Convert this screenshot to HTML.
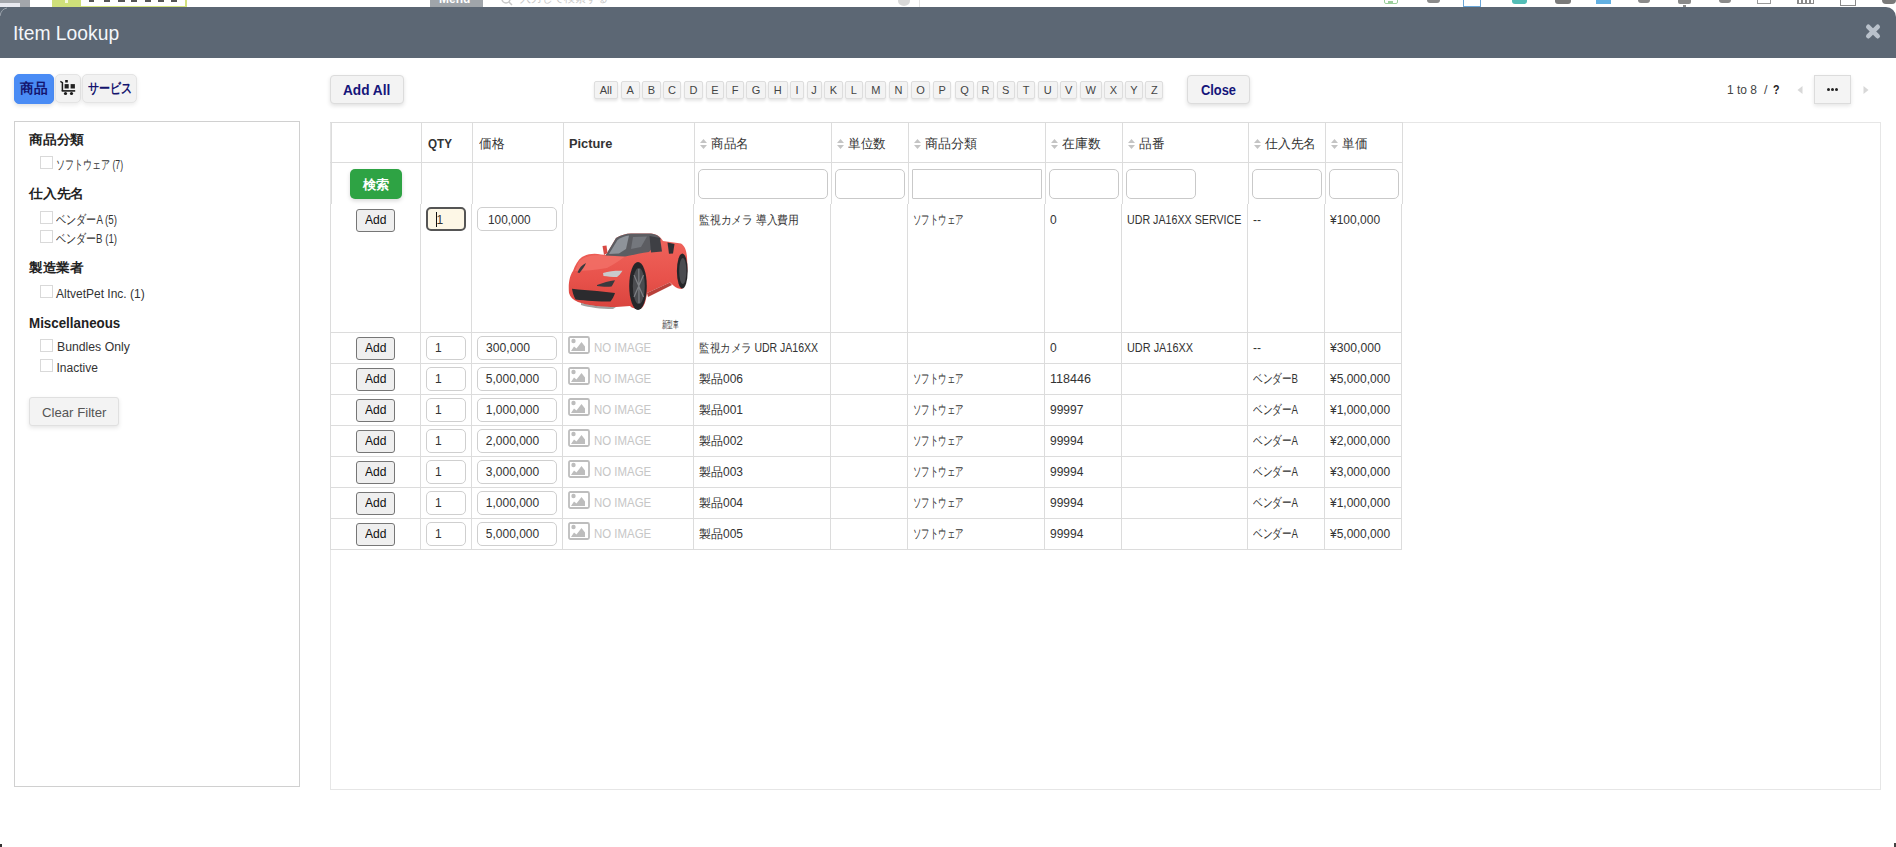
<!DOCTYPE html>
<html><head><meta charset="utf-8"><title>Item Lookup</title>
<style>
*{box-sizing:border-box;margin:0;padding:0}
html,body{width:1896px;height:847px;overflow:hidden;background:#fff;font-family:"Liberation Sans",sans-serif;color:#333}
.abs{position:absolute}
.t{position:absolute;white-space:nowrap;line-height:1}
.btn{position:absolute;box-sizing:border-box;text-align:center;white-space:nowrap}
.lt{background:#f3f3f3;border:1px solid #dedede;border-radius:2px;box-shadow:0 2px 3px rgba(0,0,0,.10);color:#444;font-size:11px;line-height:17px}
.inp{position:absolute;border:1px solid #c9c9c9;border-radius:5px;background:#fff}
.cb{position:absolute;width:13px;height:13px;border:1px solid #d6d6d6;background:#fff}
.addb{position:absolute;width:39px;height:22px;border:1px solid #767676;border-radius:3px;background:#efefef;font-size:13px;line-height:20px;text-align:center;color:#111}
.qty{position:absolute;width:40px;height:24px;border:1px solid #cfcfcf;border-radius:5px;background:#fff;font-size:12px;line-height:22px;padding-left:11px;color:#333}
.prc{position:absolute;width:80px;height:24px;border:1px solid #cfcfcf;border-radius:5px;background:#fff;font-size:12px;line-height:22px;padding-left:10px;color:#333}
.sa{position:absolute;width:7px;height:10px}
</style></head><body>

<div class="abs" style="left:0px;top:0px;width:1896px;height:8px;background:#fff"></div>
<div class="abs" style="left:0px;top:0px;width:30px;height:8px;background:#a3a6ab"></div>
<div class="abs" style="left:0px;top:3px;width:20px;height:4px;background:#e8e9ef"></div>
<div class="abs" style="left:52px;top:0px;width:29px;height:8px;background:#cfe07a"></div>
<div class="abs" style="left:81px;top:-2px;width:106px;height:10px;border:2px solid #d3e27e;border-left:0;background:#fff"></div>
<div class="abs" style="left:89px;top:0px;width:5px;height:2px;background:#555"></div>
<div class="abs" style="left:104px;top:0px;width:6px;height:2px;background:#555"></div>
<div class="abs" style="left:118px;top:0px;width:7px;height:2px;background:#555"></div>
<div class="abs" style="left:131px;top:0px;width:6px;height:2px;background:#555"></div>
<div class="abs" style="left:145px;top:0px;width:6px;height:2px;background:#555"></div>
<div class="abs" style="left:158px;top:0px;width:6px;height:2px;background:#555"></div>
<div class="abs" style="left:171px;top:0px;width:6px;height:2px;background:#555"></div>
<div class="abs" style="left:65px;top:0px;width:3px;height:3px;background:#f4f8dc"></div>
<div class="abs" style="left:430px;top:0px;width:53px;height:8px;background:#a0a5aa"></div>
<div class="t" style="left:439px;top:-7px;font-size:12px;color:#fff;font-weight:bold;">Menu</div>
<div class="abs" style="left:487px;top:0px;width:433px;height:8px;border-right:1px solid #e4e4e4;background:#fff"></div>
<div class="t" style="left:520px;top:-7px;font-size:11px;color:#c8c8c8;font-weight:normal;">入力して検索する</div>
<svg class="abs" style="left:500px;top:-4px" width="14" height="10" viewBox="0 0 14 10"><circle cx="6" cy="3" r="4" fill="none" stroke="#c8c8c8" stroke-width="1.5"/><path d="M9 6 L12 9" stroke="#c8c8c8" stroke-width="1.5"/></svg>
<div class="abs" style="left:898px;top:-4px;width:12px;height:10px;background:#d8d8d8;border-radius:50%"></div>
<div class="abs" style="left:1384px;top:-4px;width:14px;height:8px;border:1.5px solid #9ccf9c;border-radius:2px"></div>
<div class="abs" style="left:1388px;top:1px;width:5px;height:2px;background:#9ccf9c"></div>
<div class="abs" style="left:1427px;top:0px;width:13px;height:3px;background:#8a8a8a;border-radius:0 0 4px 4px"></div>
<div class="abs" style="left:1463px;top:-4px;width:18px;height:11px;border-left:1.5px solid #6aa6d8;border-right:1.5px solid #6aa6d8;border-bottom:1.5px solid #6aa6d8"></div>
<div class="abs" style="left:1512px;top:0px;width:15px;height:4px;background:#52bdb6;border-radius:0 0 3px 3px"></div>
<div class="abs" style="left:1555px;top:0px;width:16px;height:4px;background:#7a7a7a;border-radius:0 0 3px 3px"></div>
<div class="abs" style="left:1596px;top:0px;width:15px;height:4px;background:#62b0e2"></div>
<div class="abs" style="left:1638px;top:0px;width:12px;height:3px;background:#8a8a8a;border-radius:0 0 6px 6px"></div>
<div class="abs" style="left:1678px;top:0px;width:13px;height:4px;background:#8a8a8a;border-radius:0 0 2px 2px"></div>
<div class="abs" style="left:1683px;top:5px;width:3px;height:2px;background:#8a8a8a"></div>
<div class="abs" style="left:1719px;top:0px;width:12px;height:3px;background:#8a8a8a;border-radius:0 0 6px 6px"></div>
<div class="abs" style="left:1757px;top:-3px;width:14px;height:7px;border:1.2px solid #9a9a9a"></div>
<div class="abs" style="left:1797px;top:0px;width:17px;height:4px;border-bottom:1.5px solid #8a8a8a;background:repeating-linear-gradient(90deg,#8a8a8a 0 2px,transparent 2px 4px)"></div>
<div class="abs" style="left:1840px;top:-4px;width:16px;height:10px;border:1.5px solid #8a8a8a"></div>
<div class="abs" style="left:1882px;top:0px;width:14px;height:4px;background:#7a7a7a;border-radius:0 0 4px 4px"></div>
<div class="abs" style="left:0;top:7px;width:1896px;height:51px;background:#5c6774;border-radius:0 10px 0 0"></div>
<div class="t" style="left:13px;top:24px;font-size:19.3px;color:#f4f6fa;font-weight:normal;">Item Lookup</div>
<svg class="abs" style="left:0;top:7px" width="10" height="10" viewBox="0 0 10 10"><path d="M0 9 Q1 2 7 1" fill="none" stroke="#9aa2ab" stroke-width="1"/></svg>
<svg class="abs" style="left:1865px;top:23px" width="16" height="17" viewBox="0 0 16 17"><path d="M3.3 3.8 L12.7 13.2 M12.7 3.8 L3.3 13.2" stroke="#b9c1cb" stroke-width="4.6" stroke-linecap="round"/></svg>
<div class="abs" style="left:14px;top:74px;width:40px;height:30px;background:#4a8cf5;border:1px solid #4a8cf5;border-radius:5px;box-shadow:0 2px 4px rgba(0,0,0,.12)"></div>
<div class="t" style="left:20px;top:82.17px;font-size:13.5px;color:#14146e;font-weight:bold;transform:scaleX(0.979);transform-origin:0 0;">商品</div>
<div class="abs" style="left:55px;top:74px;width:26px;height:29px;background:#f2f2f2;border:1px solid #e4e4e4;border-radius:5px;box-shadow:0 2px 4px rgba(0,0,0,.08)"></div>
<svg class="abs" style="left:60px;top:79px" width="17" height="17" viewBox="0 0 17 17"><path d="M0.3 2.4 L2.4 3.6 L2.4 12" fill="none" stroke="#1a1a1a" stroke-width="1.5" stroke-linejoin="round"/><rect x="1.7" y="11.1" width="13.5" height="1.6" fill="#1a1a1a"/><rect x="5.2" y="1" width="2.6" height="2.5" fill="#1a1a1a"/><rect x="4.6" y="5.1" width="4.1" height="4.4" fill="#222"/><rect x="10.6" y="5.1" width="4.3" height="4.4" fill="#222"/><circle cx="5.5" cy="14.5" r="1.6" fill="#1a1a1a"/><circle cx="11.5" cy="14.5" r="1.6" fill="#1a1a1a"/></svg>
<div class="abs" style="left:82px;top:74px;width:55px;height:29px;background:#f2f2f2;border:1px solid #e4e4e4;border-radius:5px;box-shadow:0 2px 4px rgba(0,0,0,.08)"></div>
<div class="t" style="left:87.5px;top:82.07px;font-size:13.5px;color:#14146e;font-weight:600;transform:scaleX(0.786);transform-origin:0 0;">サービス</div>
<div class="abs" style="left:14px;top:121px;width:286px;height:666px;border:1px solid #d0d0d0;background:#fff"></div>
<div class="t" style="left:29px;top:134.12px;font-size:12.5px;color:#222;font-weight:bold;transform:scaleX(1.058);transform-origin:0 0;">商品分類</div>
<div class="abs" style="left:40px;top:156px;width:13px;height:13px;border:1px solid #d9d9d9;background:#fff"></div>
<div class="t" style="left:56px;top:159.22px;font-size:12.5px;color:#333;font-weight:normal;transform:scaleX(0.693);transform-origin:0 0;">ソフトウェア (7)</div>
<div class="t" style="left:29px;top:188.42px;font-size:12.5px;color:#222;font-weight:bold;transform:scaleX(1.058);transform-origin:0 0;">仕入先名</div>
<div class="abs" style="left:40px;top:211px;width:13px;height:13px;border:1px solid #d9d9d9;background:#fff"></div>
<div class="t" style="left:56px;top:213.72px;font-size:12.5px;color:#333;font-weight:normal;transform:scaleX(0.778);transform-origin:0 0;">ベンダーA (5)</div>
<div class="abs" style="left:40px;top:230px;width:13px;height:13px;border:1px solid #d9d9d9;background:#fff"></div>
<div class="t" style="left:56px;top:232.72px;font-size:12.5px;color:#333;font-weight:normal;transform:scaleX(0.771);transform-origin:0 0;">ベンダーB (1)</div>
<div class="t" style="left:29px;top:261.52px;font-size:12.5px;color:#222;font-weight:bold;transform:scaleX(1.048);transform-origin:0 0;">製造業者</div>
<div class="abs" style="left:40px;top:285px;width:13px;height:13px;border:1px solid #d9d9d9;background:#fff"></div>
<div class="t" style="left:56px;top:287.84px;font-size:12px;color:#333;font-weight:normal;">AltvetPet Inc. (1)</div>
<div class="t" style="left:29px;top:316.35px;font-size:14px;color:#222;font-weight:bold;transform:scaleX(0.954);transform-origin:0 0;">Miscellaneous</div>
<div class="abs" style="left:40px;top:339px;width:13px;height:13px;border:1px solid #d9d9d9;background:#fff"></div>
<div class="t" style="left:56.5px;top:341.44px;font-size:12px;color:#333;font-weight:normal;transform:scaleX(1.020);transform-origin:0 0;">Bundles Only</div>
<div class="abs" style="left:40px;top:359px;width:13px;height:13px;border:1px solid #d9d9d9;background:#fff"></div>
<div class="t" style="left:56.5px;top:361.74px;font-size:12px;color:#333;font-weight:normal;">Inactive</div>
<div class="abs" style="left:29px;top:397px;width:90px;height:29px;background:#f3f3f3;border:1px solid #e0e0e0;border-radius:3px;box-shadow:0 2px 4px rgba(0,0,0,.10)"></div>
<div class="t" style="left:42px;top:406.0px;font-size:13px;color:#555;font-weight:normal;transform:scaleX(1.014);transform-origin:0 0;">Clear Filter</div>
<div class="abs" style="left:330px;top:75px;width:74px;height:29px;background:#f3f3f3;border:1px solid #dcdcdc;border-radius:4px;box-shadow:0 2px 4px rgba(0,0,0,.12)"></div>
<div class="t" style="left:343px;top:83.15px;font-size:14px;color:#15157a;font-weight:bold;transform:scaleX(0.976);transform-origin:0 0;">Add All</div>
<div class="btn lt" style="left:593.5px;top:80.5px;width:24.7px;height:18.5px">All</div>
<div class="btn lt" style="left:620.8px;top:80.5px;width:18.9px;height:18.5px">A</div>
<div class="btn lt" style="left:642.3px;top:80.5px;width:18.3px;height:18.5px">B</div>
<div class="btn lt" style="left:662.8px;top:80.5px;width:18.4px;height:18.5px">C</div>
<div class="btn lt" style="left:683.7px;top:80.5px;width:19.8px;height:18.5px">D</div>
<div class="btn lt" style="left:706.3px;top:80.5px;width:17.4px;height:18.5px">E</div>
<div class="btn lt" style="left:726.3px;top:80.5px;width:17.4px;height:18.5px">F</div>
<div class="btn lt" style="left:746.2px;top:80.5px;width:19.6px;height:18.5px">G</div>
<div class="btn lt" style="left:768.0px;top:80.5px;width:19.7px;height:18.5px">H</div>
<div class="btn lt" style="left:789.9px;top:80.5px;width:14.5px;height:18.5px">I</div>
<div class="btn lt" style="left:806.6px;top:80.5px;width:15.0px;height:18.5px">J</div>
<div class="btn lt" style="left:823.8px;top:80.5px;width:19.0px;height:18.5px">K</div>
<div class="btn lt" style="left:845.0px;top:80.5px;width:17.7px;height:18.5px">L</div>
<div class="btn lt" style="left:865.3px;top:80.5px;width:21.2px;height:18.5px">M</div>
<div class="btn lt" style="left:888.7px;top:80.5px;width:19.6px;height:18.5px">N</div>
<div class="btn lt" style="left:910.8px;top:80.5px;width:19.6px;height:18.5px">O</div>
<div class="btn lt" style="left:933.0px;top:80.5px;width:18.4px;height:18.5px">P</div>
<div class="btn lt" style="left:954.6px;top:80.5px;width:19.9px;height:18.5px">Q</div>
<div class="btn lt" style="left:976.7px;top:80.5px;width:17.7px;height:18.5px">R</div>
<div class="btn lt" style="left:996.6px;top:80.5px;width:18.1px;height:18.5px">S</div>
<div class="btn lt" style="left:1016.9px;top:80.5px;width:18.4px;height:18.5px">T</div>
<div class="btn lt" style="left:1037.8px;top:80.5px;width:19.9px;height:18.5px">U</div>
<div class="btn lt" style="left:1059.9px;top:80.5px;width:17.5px;height:18.5px">V</div>
<div class="btn lt" style="left:1080.0px;top:80.5px;width:21.5px;height:18.5px">W</div>
<div class="btn lt" style="left:1104.3px;top:80.5px;width:18.4px;height:18.5px">X</div>
<div class="btn lt" style="left:1125.2px;top:80.5px;width:17.4px;height:18.5px">Y</div>
<div class="btn lt" style="left:1145.1px;top:80.5px;width:18.4px;height:18.5px">Z</div>
<div class="abs" style="left:1187px;top:75px;width:63px;height:29px;background:#f3f3f3;border:1px solid #dcdcdc;border-radius:4px;box-shadow:0 2px 4px rgba(0,0,0,.12)"></div>
<div class="t" style="left:1201px;top:83.15px;font-size:14px;color:#15157a;font-weight:bold;transform:scaleX(0.918);transform-origin:0 0;">Close</div>
<div class="t" style="left:1727px;top:84.42px;font-size:12.5px;color:#444;font-weight:normal;transform:scaleX(0.959);transform-origin:0 0;">1 to 8</div>
<div class="t" style="left:1764px;top:84.42px;font-size:12.5px;color:#444;font-weight:normal;">/</div>
<div class="t" style="left:1772.5px;top:84.42px;font-size:12.5px;color:#222;font-weight:bold;transform:scaleX(0.851);transform-origin:0 0;">?</div>
<svg class="abs" style="left:1797px;top:86px" width="6" height="8" viewBox="0 0 6 8"><path d="M5.5 0 L0.5 4 L5.5 8 Z" fill="#d8d8d8"/></svg>
<div class="abs" style="left:1814px;top:75px;width:37px;height:29px;background:#f4f4f4;border:1px solid #dcdcdc;box-shadow:0 2px 4px rgba(0,0,0,.10)"></div>
<div class="abs" style="left:1827px;top:88.3px;width:3px;height:3px;background:#222;border-radius:50%"></div>
<div class="abs" style="left:1831px;top:88.3px;width:3px;height:3px;background:#222;border-radius:50%"></div>
<div class="abs" style="left:1835px;top:88.3px;width:3px;height:3px;background:#222;border-radius:50%"></div>
<svg class="abs" style="left:1863px;top:86px" width="6" height="8" viewBox="0 0 6 8"><path d="M0.5 0 L5.5 4 L0.5 8 Z" fill="#d8d8d8"/></svg>
<div class="abs" style="left:330px;top:122px;width:1551px;height:668px;border:1px solid #e6e6e6;background:#fff"></div>
<div class="abs" style="left:330px;top:122px;width:1073px;height:1px;background:#dcdcdc"></div>
<div class="abs" style="left:330px;top:162px;width:1073px;height:1px;background:#dcdcdc"></div>
<div class="abs" style="left:330px;top:332px;width:1072px;height:1px;background:#dcdcdc"></div>
<div class="abs" style="left:330px;top:363px;width:1072px;height:1px;background:#dcdcdc"></div>
<div class="abs" style="left:330px;top:394px;width:1072px;height:1px;background:#dcdcdc"></div>
<div class="abs" style="left:330px;top:425px;width:1072px;height:1px;background:#dcdcdc"></div>
<div class="abs" style="left:330px;top:456px;width:1072px;height:1px;background:#dcdcdc"></div>
<div class="abs" style="left:330px;top:487px;width:1072px;height:1px;background:#dcdcdc"></div>
<div class="abs" style="left:330px;top:518px;width:1072px;height:1px;background:#dcdcdc"></div>
<div class="abs" style="left:330px;top:549px;width:1072px;height:1px;background:#dcdcdc"></div>
<div class="abs" style="left:331px;top:123px;width:1px;height:81px;background:#dcdcdc"></div>
<div class="abs" style="left:330px;top:204px;width:1px;height:346px;background:#dcdcdc"></div>
<div class="abs" style="left:421px;top:123px;width:1px;height:81px;background:#dcdcdc"></div>
<div class="abs" style="left:420px;top:204px;width:1px;height:346px;background:#dcdcdc"></div>
<div class="abs" style="left:472px;top:123px;width:1px;height:81px;background:#dcdcdc"></div>
<div class="abs" style="left:471px;top:204px;width:1px;height:346px;background:#dcdcdc"></div>
<div class="abs" style="left:563px;top:123px;width:1px;height:81px;background:#dcdcdc"></div>
<div class="abs" style="left:562px;top:204px;width:1px;height:346px;background:#dcdcdc"></div>
<div class="abs" style="left:694px;top:123px;width:1px;height:81px;background:#dcdcdc"></div>
<div class="abs" style="left:693px;top:204px;width:1px;height:346px;background:#dcdcdc"></div>
<div class="abs" style="left:831px;top:123px;width:1px;height:81px;background:#dcdcdc"></div>
<div class="abs" style="left:830px;top:204px;width:1px;height:346px;background:#dcdcdc"></div>
<div class="abs" style="left:908px;top:123px;width:1px;height:81px;background:#dcdcdc"></div>
<div class="abs" style="left:907px;top:204px;width:1px;height:346px;background:#dcdcdc"></div>
<div class="abs" style="left:1045px;top:123px;width:1px;height:81px;background:#dcdcdc"></div>
<div class="abs" style="left:1044px;top:204px;width:1px;height:346px;background:#dcdcdc"></div>
<div class="abs" style="left:1122px;top:123px;width:1px;height:81px;background:#dcdcdc"></div>
<div class="abs" style="left:1121px;top:204px;width:1px;height:346px;background:#dcdcdc"></div>
<div class="abs" style="left:1248px;top:123px;width:1px;height:81px;background:#dcdcdc"></div>
<div class="abs" style="left:1247px;top:204px;width:1px;height:346px;background:#dcdcdc"></div>
<div class="abs" style="left:1325px;top:123px;width:1px;height:81px;background:#dcdcdc"></div>
<div class="abs" style="left:1324px;top:204px;width:1px;height:346px;background:#dcdcdc"></div>
<div class="abs" style="left:1402px;top:123px;width:1px;height:81px;background:#dcdcdc"></div>
<div class="abs" style="left:1401px;top:204px;width:1px;height:346px;background:#dcdcdc"></div>
<div class="t" style="left:427.6px;top:138.14px;font-size:12px;color:#333;font-weight:bold;transform:scaleX(0.973);transform-origin:0 0;">QTY</div>
<div class="t" style="left:478.5px;top:137.0px;font-size:13px;color:#333;font-weight:normal;transform:scaleX(0.977);transform-origin:0 0;">価格</div>
<div class="t" style="left:568.6px;top:138.14px;font-size:12px;color:#333;font-weight:bold;transform:scaleX(1.067);transform-origin:0 0;">Picture</div>
<svg class="sa" style="left:700px;top:138.5px" viewBox="0 0 7 10"><path d="M3.5 0 L7 4 L0 4 Z M0 6 L7 6 L3.5 10 Z" fill="#c4c4c4"/></svg>
<div class="t" style="left:710.5px;top:137.0px;font-size:13px;color:#333;font-weight:normal;transform:scaleX(0.962);transform-origin:0 0;">商品名</div>
<svg class="sa" style="left:837px;top:138.5px" viewBox="0 0 7 10"><path d="M3.5 0 L7 4 L0 4 Z M0 6 L7 6 L3.5 10 Z" fill="#c4c4c4"/></svg>
<div class="t" style="left:847.5px;top:137.0px;font-size:13px;color:#333;font-weight:normal;transform:scaleX(0.969);transform-origin:0 0;">単位数</div>
<svg class="sa" style="left:914px;top:138.5px" viewBox="0 0 7 10"><path d="M3.5 0 L7 4 L0 4 Z M0 6 L7 6 L3.5 10 Z" fill="#c4c4c4"/></svg>
<div class="t" style="left:924.5px;top:137.0px;font-size:13px;color:#333;font-weight:normal;">商品分類</div>
<svg class="sa" style="left:1051px;top:138.5px" viewBox="0 0 7 10"><path d="M3.5 0 L7 4 L0 4 Z M0 6 L7 6 L3.5 10 Z" fill="#c4c4c4"/></svg>
<div class="t" style="left:1061.5px;top:137.0px;font-size:13px;color:#333;font-weight:normal;transform:scaleX(0.985);transform-origin:0 0;">在庫数</div>
<svg class="sa" style="left:1128px;top:138.5px" viewBox="0 0 7 10"><path d="M3.5 0 L7 4 L0 4 Z M0 6 L7 6 L3.5 10 Z" fill="#c4c4c4"/></svg>
<div class="t" style="left:1138.5px;top:137.0px;font-size:13px;color:#333;font-weight:normal;transform:scaleX(0.973);transform-origin:0 0;">品番</div>
<svg class="sa" style="left:1254px;top:138.5px" viewBox="0 0 7 10"><path d="M3.5 0 L7 4 L0 4 Z M0 6 L7 6 L3.5 10 Z" fill="#c4c4c4"/></svg>
<div class="t" style="left:1264.5px;top:137.0px;font-size:13px;color:#333;font-weight:normal;transform:scaleX(0.981);transform-origin:0 0;">仕入先名</div>
<svg class="sa" style="left:1331px;top:138.5px" viewBox="0 0 7 10"><path d="M3.5 0 L7 4 L0 4 Z M0 6 L7 6 L3.5 10 Z" fill="#c4c4c4"/></svg>
<div class="t" style="left:1341.5px;top:137.0px;font-size:13px;color:#333;font-weight:normal;transform:scaleX(0.973);transform-origin:0 0;">単価</div>
<div class="abs" style="left:350px;top:169px;width:52px;height:30px;background:#2ea344;border-radius:5px;box-shadow:0 2px 4px rgba(0,0,0,.15)"></div>
<div class="t" style="left:363px;top:178.0px;font-size:13px;color:#fff;font-weight:bold;transform:scaleX(1.019);transform-origin:0 0;">検索</div>
<div class="inp" style="left:698px;top:169px;width:130px;height:30px;border-radius:5px"></div>
<div class="inp" style="left:835px;top:169px;width:70px;height:30px;border-radius:5px"></div>
<div class="inp" style="left:912px;top:169px;width:130px;height:30px;border-radius:1px"></div>
<div class="inp" style="left:1049px;top:169px;width:70px;height:30px;border-radius:5px"></div>
<div class="inp" style="left:1126px;top:169px;width:70px;height:30px;border-radius:5px"></div>
<div class="inp" style="left:1252px;top:169px;width:70px;height:30px;border-radius:5px"></div>
<div class="inp" style="left:1329px;top:169px;width:70px;height:30px;border-radius:5px"></div>
<div class="abs" style="left:356px;top:209px;width:39px;height:23px;border:1px solid #767676;border-radius:3px;background:#efefef"></div>
<div class="t" style="left:364.5px;top:212.6px;font-size:13px;color:#111;font-weight:normal;transform:scaleX(0.929);transform-origin:0 0;">Add</div>
<div class="abs" style="left:426px;top:207px;width:40px;height:24px;border:2px solid #555;border-radius:5px;background:#fdf7e6"></div>
<div class="abs" style="left:435.5px;top:212px;width:1px;height:15px;background:#111"></div>
<div class="t" style="left:436.5px;top:214.34px;font-size:12px;color:#333;font-weight:normal;">1</div>
<div class="abs" style="left:477px;top:207px;width:80px;height:24px;border:1px solid #cfcfcf;border-radius:5px;background:#fff"></div>
<div class="t" style="left:487.7px;top:214.34px;font-size:12px;color:#333;font-weight:normal;transform:scaleX(0.984);transform-origin:0 0;">100,000</div>
<div class="t" style="left:699px;top:213.84px;font-size:12px;color:#333;font-weight:normal;transform:scaleX(0.898);transform-origin:0 0;">監視カメラ 導入費用</div>
<div class="t" style="left:913px;top:212.5px;font-size:13px;color:#333;font-weight:normal;transform:scaleX(0.647);transform-origin:0 0;">ソフトウェア</div>
<div class="t" style="left:1050px;top:213.84px;font-size:12px;color:#333;font-weight:normal;">0</div>
<div class="t" style="left:1127px;top:213.84px;font-size:12px;color:#333;font-weight:normal;transform:scaleX(0.890);transform-origin:0 0;">UDR JA16XX SERVICE</div>
<div class="t" style="left:1253px;top:213.84px;font-size:12px;color:#333;font-weight:normal;">--</div>
<div class="t" style="left:1330px;top:213.84px;font-size:12px;color:#333;font-weight:normal;">¥100,000</div>
<div class="abs" style="left:356px;top:337px;width:39px;height:23px;border:1px solid #767676;border-radius:3px;background:#efefef"></div>
<div class="t" style="left:364.5px;top:340.6px;font-size:13px;color:#111;font-weight:normal;transform:scaleX(0.929);transform-origin:0 0;">Add</div>
<div class="abs" style="left:426px;top:336px;width:40px;height:24px;border:1px solid #cfcfcf;border-radius:5px;background:#fff"></div>
<div class="t" style="left:435px;top:342.34px;font-size:12px;color:#333;font-weight:normal;">1</div>
<div class="abs" style="left:477px;top:336px;width:80px;height:24px;border:1px solid #cfcfcf;border-radius:5px;background:#fff"></div>
<div class="t" style="left:485.8px;top:342.34px;font-size:12px;color:#333;font-weight:normal;transform:scaleX(1.014);transform-origin:0 0;">300,000</div>
<svg class="abs" style="left:568px;top:336px" width="22" height="18" viewBox="0 0 22 18"><rect x="1" y="1" width="20" height="16" rx="1.5" fill="none" stroke="#bdbdbd" stroke-width="1.8"/><circle cx="5.5" cy="5" r="2.2" fill="#bdbdbd"/><path d="M3 15 L6 10.5 L8.5 12.5 L13.5 6 L17 10.5 L17 15 Z" fill="#bdbdbd"/></svg>
<div class="t" style="left:594px;top:341.84px;font-size:12px;color:#c6c6c6;font-weight:normal;transform:scaleX(0.953);transform-origin:0 0;">NO IMAGE</div>
<div class="t" style="left:699px;top:342.34px;font-size:12px;color:#333;font-weight:normal;transform:scaleX(0.875);transform-origin:0 0;">監視カメラ UDR JA16XX</div>
<div class="t" style="left:1050px;top:342.34px;font-size:12px;color:#333;font-weight:normal;">0</div>
<div class="t" style="left:1127px;top:342.34px;font-size:12px;color:#333;font-weight:normal;transform:scaleX(0.908);transform-origin:0 0;">UDR JA16XX</div>
<div class="t" style="left:1253px;top:342.34px;font-size:12px;color:#333;font-weight:normal;">--</div>
<div class="t" style="left:1330px;top:342.34px;font-size:12px;color:#333;font-weight:normal;transform:scaleX(1.013);transform-origin:0 0;">¥300,000</div>
<div class="abs" style="left:356px;top:368px;width:39px;height:23px;border:1px solid #767676;border-radius:3px;background:#efefef"></div>
<div class="t" style="left:364.5px;top:371.6px;font-size:13px;color:#111;font-weight:normal;transform:scaleX(0.929);transform-origin:0 0;">Add</div>
<div class="abs" style="left:426px;top:367px;width:40px;height:24px;border:1px solid #cfcfcf;border-radius:5px;background:#fff"></div>
<div class="t" style="left:435px;top:373.34px;font-size:12px;color:#333;font-weight:normal;">1</div>
<div class="abs" style="left:477px;top:367px;width:80px;height:24px;border:1px solid #cfcfcf;border-radius:5px;background:#fff"></div>
<div class="t" style="left:485.8px;top:373.34px;font-size:12px;color:#333;font-weight:normal;">5,000,000</div>
<svg class="abs" style="left:568px;top:367px" width="22" height="18" viewBox="0 0 22 18"><rect x="1" y="1" width="20" height="16" rx="1.5" fill="none" stroke="#bdbdbd" stroke-width="1.8"/><circle cx="5.5" cy="5" r="2.2" fill="#bdbdbd"/><path d="M3 15 L6 10.5 L8.5 12.5 L13.5 6 L17 10.5 L17 15 Z" fill="#bdbdbd"/></svg>
<div class="t" style="left:594px;top:372.84px;font-size:12px;color:#c6c6c6;font-weight:normal;transform:scaleX(0.953);transform-origin:0 0;">NO IMAGE</div>
<div class="t" style="left:699px;top:373.34px;font-size:12px;color:#333;font-weight:normal;">製品006</div>
<div class="t" style="left:913px;top:372.0px;font-size:13px;color:#333;font-weight:normal;transform:scaleX(0.647);transform-origin:0 0;">ソフトウェア</div>
<div class="t" style="left:1050px;top:373.34px;font-size:12px;color:#333;font-weight:normal;transform:scaleX(1.047);transform-origin:0 0;">118446</div>
<div class="t" style="left:1253px;top:372.0px;font-size:13px;color:#333;font-weight:normal;transform:scaleX(0.742);transform-origin:0 0;">ベンダーB</div>
<div class="t" style="left:1330px;top:373.34px;font-size:12px;color:#333;font-weight:normal;">¥5,000,000</div>
<div class="abs" style="left:356px;top:399px;width:39px;height:23px;border:1px solid #767676;border-radius:3px;background:#efefef"></div>
<div class="t" style="left:364.5px;top:402.6px;font-size:13px;color:#111;font-weight:normal;transform:scaleX(0.929);transform-origin:0 0;">Add</div>
<div class="abs" style="left:426px;top:398px;width:40px;height:24px;border:1px solid #cfcfcf;border-radius:5px;background:#fff"></div>
<div class="t" style="left:435px;top:404.34px;font-size:12px;color:#333;font-weight:normal;">1</div>
<div class="abs" style="left:477px;top:398px;width:80px;height:24px;border:1px solid #cfcfcf;border-radius:5px;background:#fff"></div>
<div class="t" style="left:485.8px;top:404.34px;font-size:12px;color:#333;font-weight:normal;">1,000,000</div>
<svg class="abs" style="left:568px;top:398px" width="22" height="18" viewBox="0 0 22 18"><rect x="1" y="1" width="20" height="16" rx="1.5" fill="none" stroke="#bdbdbd" stroke-width="1.8"/><circle cx="5.5" cy="5" r="2.2" fill="#bdbdbd"/><path d="M3 15 L6 10.5 L8.5 12.5 L13.5 6 L17 10.5 L17 15 Z" fill="#bdbdbd"/></svg>
<div class="t" style="left:594px;top:403.84px;font-size:12px;color:#c6c6c6;font-weight:normal;transform:scaleX(0.953);transform-origin:0 0;">NO IMAGE</div>
<div class="t" style="left:699px;top:404.34px;font-size:12px;color:#333;font-weight:normal;">製品001</div>
<div class="t" style="left:913px;top:403.0px;font-size:13px;color:#333;font-weight:normal;transform:scaleX(0.647);transform-origin:0 0;">ソフトウェア</div>
<div class="t" style="left:1050px;top:404.34px;font-size:12px;color:#333;font-weight:normal;">99997</div>
<div class="t" style="left:1253px;top:403.0px;font-size:13px;color:#333;font-weight:normal;transform:scaleX(0.742);transform-origin:0 0;">ベンダーA</div>
<div class="t" style="left:1330px;top:404.34px;font-size:12px;color:#333;font-weight:normal;">¥1,000,000</div>
<div class="abs" style="left:356px;top:430px;width:39px;height:23px;border:1px solid #767676;border-radius:3px;background:#efefef"></div>
<div class="t" style="left:364.5px;top:433.6px;font-size:13px;color:#111;font-weight:normal;transform:scaleX(0.929);transform-origin:0 0;">Add</div>
<div class="abs" style="left:426px;top:429px;width:40px;height:24px;border:1px solid #cfcfcf;border-radius:5px;background:#fff"></div>
<div class="t" style="left:435px;top:435.34px;font-size:12px;color:#333;font-weight:normal;">1</div>
<div class="abs" style="left:477px;top:429px;width:80px;height:24px;border:1px solid #cfcfcf;border-radius:5px;background:#fff"></div>
<div class="t" style="left:485.8px;top:435.34px;font-size:12px;color:#333;font-weight:normal;">2,000,000</div>
<svg class="abs" style="left:568px;top:429px" width="22" height="18" viewBox="0 0 22 18"><rect x="1" y="1" width="20" height="16" rx="1.5" fill="none" stroke="#bdbdbd" stroke-width="1.8"/><circle cx="5.5" cy="5" r="2.2" fill="#bdbdbd"/><path d="M3 15 L6 10.5 L8.5 12.5 L13.5 6 L17 10.5 L17 15 Z" fill="#bdbdbd"/></svg>
<div class="t" style="left:594px;top:434.84px;font-size:12px;color:#c6c6c6;font-weight:normal;transform:scaleX(0.953);transform-origin:0 0;">NO IMAGE</div>
<div class="t" style="left:699px;top:435.34px;font-size:12px;color:#333;font-weight:normal;">製品002</div>
<div class="t" style="left:913px;top:434.0px;font-size:13px;color:#333;font-weight:normal;transform:scaleX(0.647);transform-origin:0 0;">ソフトウェア</div>
<div class="t" style="left:1050px;top:435.34px;font-size:12px;color:#333;font-weight:normal;">99994</div>
<div class="t" style="left:1253px;top:434.0px;font-size:13px;color:#333;font-weight:normal;transform:scaleX(0.742);transform-origin:0 0;">ベンダーA</div>
<div class="t" style="left:1330px;top:435.34px;font-size:12px;color:#333;font-weight:normal;">¥2,000,000</div>
<div class="abs" style="left:356px;top:461px;width:39px;height:23px;border:1px solid #767676;border-radius:3px;background:#efefef"></div>
<div class="t" style="left:364.5px;top:464.6px;font-size:13px;color:#111;font-weight:normal;transform:scaleX(0.929);transform-origin:0 0;">Add</div>
<div class="abs" style="left:426px;top:460px;width:40px;height:24px;border:1px solid #cfcfcf;border-radius:5px;background:#fff"></div>
<div class="t" style="left:435px;top:466.34px;font-size:12px;color:#333;font-weight:normal;">1</div>
<div class="abs" style="left:477px;top:460px;width:80px;height:24px;border:1px solid #cfcfcf;border-radius:5px;background:#fff"></div>
<div class="t" style="left:485.8px;top:466.34px;font-size:12px;color:#333;font-weight:normal;">3,000,000</div>
<svg class="abs" style="left:568px;top:460px" width="22" height="18" viewBox="0 0 22 18"><rect x="1" y="1" width="20" height="16" rx="1.5" fill="none" stroke="#bdbdbd" stroke-width="1.8"/><circle cx="5.5" cy="5" r="2.2" fill="#bdbdbd"/><path d="M3 15 L6 10.5 L8.5 12.5 L13.5 6 L17 10.5 L17 15 Z" fill="#bdbdbd"/></svg>
<div class="t" style="left:594px;top:465.84px;font-size:12px;color:#c6c6c6;font-weight:normal;transform:scaleX(0.953);transform-origin:0 0;">NO IMAGE</div>
<div class="t" style="left:699px;top:466.34px;font-size:12px;color:#333;font-weight:normal;">製品003</div>
<div class="t" style="left:913px;top:465.0px;font-size:13px;color:#333;font-weight:normal;transform:scaleX(0.647);transform-origin:0 0;">ソフトウェア</div>
<div class="t" style="left:1050px;top:466.34px;font-size:12px;color:#333;font-weight:normal;">99994</div>
<div class="t" style="left:1253px;top:465.0px;font-size:13px;color:#333;font-weight:normal;transform:scaleX(0.742);transform-origin:0 0;">ベンダーA</div>
<div class="t" style="left:1330px;top:466.34px;font-size:12px;color:#333;font-weight:normal;">¥3,000,000</div>
<div class="abs" style="left:356px;top:492px;width:39px;height:23px;border:1px solid #767676;border-radius:3px;background:#efefef"></div>
<div class="t" style="left:364.5px;top:495.6px;font-size:13px;color:#111;font-weight:normal;transform:scaleX(0.929);transform-origin:0 0;">Add</div>
<div class="abs" style="left:426px;top:491px;width:40px;height:24px;border:1px solid #cfcfcf;border-radius:5px;background:#fff"></div>
<div class="t" style="left:435px;top:497.34px;font-size:12px;color:#333;font-weight:normal;">1</div>
<div class="abs" style="left:477px;top:491px;width:80px;height:24px;border:1px solid #cfcfcf;border-radius:5px;background:#fff"></div>
<div class="t" style="left:485.8px;top:497.34px;font-size:12px;color:#333;font-weight:normal;">1,000,000</div>
<svg class="abs" style="left:568px;top:491px" width="22" height="18" viewBox="0 0 22 18"><rect x="1" y="1" width="20" height="16" rx="1.5" fill="none" stroke="#bdbdbd" stroke-width="1.8"/><circle cx="5.5" cy="5" r="2.2" fill="#bdbdbd"/><path d="M3 15 L6 10.5 L8.5 12.5 L13.5 6 L17 10.5 L17 15 Z" fill="#bdbdbd"/></svg>
<div class="t" style="left:594px;top:496.84px;font-size:12px;color:#c6c6c6;font-weight:normal;transform:scaleX(0.953);transform-origin:0 0;">NO IMAGE</div>
<div class="t" style="left:699px;top:497.34px;font-size:12px;color:#333;font-weight:normal;">製品004</div>
<div class="t" style="left:913px;top:496.0px;font-size:13px;color:#333;font-weight:normal;transform:scaleX(0.647);transform-origin:0 0;">ソフトウェア</div>
<div class="t" style="left:1050px;top:497.34px;font-size:12px;color:#333;font-weight:normal;">99994</div>
<div class="t" style="left:1253px;top:496.0px;font-size:13px;color:#333;font-weight:normal;transform:scaleX(0.742);transform-origin:0 0;">ベンダーA</div>
<div class="t" style="left:1330px;top:497.34px;font-size:12px;color:#333;font-weight:normal;">¥1,000,000</div>
<div class="abs" style="left:356px;top:523px;width:39px;height:23px;border:1px solid #767676;border-radius:3px;background:#efefef"></div>
<div class="t" style="left:364.5px;top:526.6px;font-size:13px;color:#111;font-weight:normal;transform:scaleX(0.929);transform-origin:0 0;">Add</div>
<div class="abs" style="left:426px;top:522px;width:40px;height:24px;border:1px solid #cfcfcf;border-radius:5px;background:#fff"></div>
<div class="t" style="left:435px;top:528.34px;font-size:12px;color:#333;font-weight:normal;">1</div>
<div class="abs" style="left:477px;top:522px;width:80px;height:24px;border:1px solid #cfcfcf;border-radius:5px;background:#fff"></div>
<div class="t" style="left:485.8px;top:528.34px;font-size:12px;color:#333;font-weight:normal;">5,000,000</div>
<svg class="abs" style="left:568px;top:522px" width="22" height="18" viewBox="0 0 22 18"><rect x="1" y="1" width="20" height="16" rx="1.5" fill="none" stroke="#bdbdbd" stroke-width="1.8"/><circle cx="5.5" cy="5" r="2.2" fill="#bdbdbd"/><path d="M3 15 L6 10.5 L8.5 12.5 L13.5 6 L17 10.5 L17 15 Z" fill="#bdbdbd"/></svg>
<div class="t" style="left:594px;top:527.84px;font-size:12px;color:#c6c6c6;font-weight:normal;transform:scaleX(0.953);transform-origin:0 0;">NO IMAGE</div>
<div class="t" style="left:699px;top:528.34px;font-size:12px;color:#333;font-weight:normal;">製品005</div>
<div class="t" style="left:913px;top:527.0px;font-size:13px;color:#333;font-weight:normal;transform:scaleX(0.647);transform-origin:0 0;">ソフトウェア</div>
<div class="t" style="left:1050px;top:528.34px;font-size:12px;color:#333;font-weight:normal;">99994</div>
<div class="t" style="left:1253px;top:527.0px;font-size:13px;color:#333;font-weight:normal;transform:scaleX(0.742);transform-origin:0 0;">ベンダーA</div>
<div class="t" style="left:1330px;top:528.34px;font-size:12px;color:#333;font-weight:normal;">¥5,000,000</div>
<svg class="abs" style="left:563px;top:215px" width="131" height="117" viewBox="0 0 131 117">
<defs>
<linearGradient id="bd" x1="0" y1="0" x2="0" y2="1"><stop offset="0" stop-color="#f0665e"/><stop offset="0.6" stop-color="#e8524b"/><stop offset="1" stop-color="#d8443e"/></linearGradient>
</defs>
<path d="M6 78 C5 68 7 60 10 56 C12 50 15 45 19 42 C24 39 31 38 38 39.5 L43 40 L53 23 C58 20 63 18.5 68 18.5 L88 18.5 C93 19 97 21 100 26 L118 28.5 C122 31 123.5 36 124 42 L124.5 53 C124 62 122 70 119 74 C116 74 113 73 111 71 L107 67.5 L84 78 C83 86 81 92 78 93.5 C73 94 69 93.5 67 91 L53 92 C40 92 25 91 15 87 C10 85 7 82 6 78 Z" fill="url(#bd)"/>
<path d="M16 46 C22 41 30 39.5 40 40.5 L62 41.5 C56 46 50 50 44 53 C33 55 22 56 12 56 Z" fill="#f27068" opacity="0.8"/>
<path d="M42.5 40.5 L53 23 C58 20 63 18.5 68 18.5 L88 18.5 C93 19 96 21 98 24 L92 30 L86 37 C78 38 70 40 62 41.5 Z" fill="#5c5d62"/>
<path d="M46 39 L54.5 25 C58 22.5 62 21 66 20.5 L63 34 L56 38.5 Z" fill="#8e939a"/>
<path d="M70 22 L84 21.5 L78 32 L68 34 Z" fill="#74777d"/>
<path d="M86.5 21 L97 23 L99 36.5 L88 37.5 Z" fill="#3e3f44"/>
<path d="M104.5 27.5 L111.5 29 L110 38.5 L106 38.7 Z" fill="#2e2e33"/>
<path d="M39.5 31 L43.5 30.5 L44.5 38 L41 40 Z" fill="#d84a44"/>
<path d="M9 73.8 C17 75 26 75.5 34 76 L52 78 C51 81 49.5 84 47.5 86.5 C36 86.5 22 85.5 12.6 84.4 C10.5 81 9.5 77 9 73.8 Z" fill="#2b2b2e"/>
<path d="M40 58 C46 56 53 55.5 59.5 55.7 C58 58 56 60.5 54 62 C49 62 44 61.5 40.5 61 Z" fill="#c9cacd"/>
<path d="M34 70 C40 68 46 66 52 65.3 C51 67 50 69.5 48.5 71.5 C43 72 38 71.5 34 71 Z" fill="#3a3a3e"/>
<path d="M14.5 57.5 C16 53 19 50 23 48 C22 51 19 55 16.5 58 Z" fill="#3a3a3e"/>
<ellipse cx="75" cy="71" rx="8.8" ry="24" fill="#262629"/>
<ellipse cx="75.8" cy="71" rx="6" ry="18" fill="#4b4c50"/>
<path d="M75.8 54 L76 88 M71 60 L80.5 82 M80.5 60 L71 82" stroke="#7d7f84" stroke-width="1.2"/>
<ellipse cx="119.3" cy="56" rx="5.4" ry="17.6" fill="#262629"/>
<ellipse cx="119.8" cy="56" rx="3.6" ry="13" fill="#4b4c50"/>
<path d="M84 78 L107 67.5 L109 70 L85 82 Z" fill="#b8403a"/>
<path d="M18 88 C28 91 42 92 53 92 L50 94 C38 94 26 92.5 18 90 Z" fill="#444" opacity="0.5"/>
<text x="98.5" y="112.5" font-size="10" font-family="Liberation Sans, sans-serif" fill="#333" textLength="17" lengthAdjust="spacingAndGlyphs">新型車</text>
</svg>

<div class="abs" style="left:0px;top:844px;width:2px;height:3px;background:#333"></div>
<div class="abs" style="left:1894px;top:843px;width:2px;height:4px;background:#444"></div>
</body></html>
